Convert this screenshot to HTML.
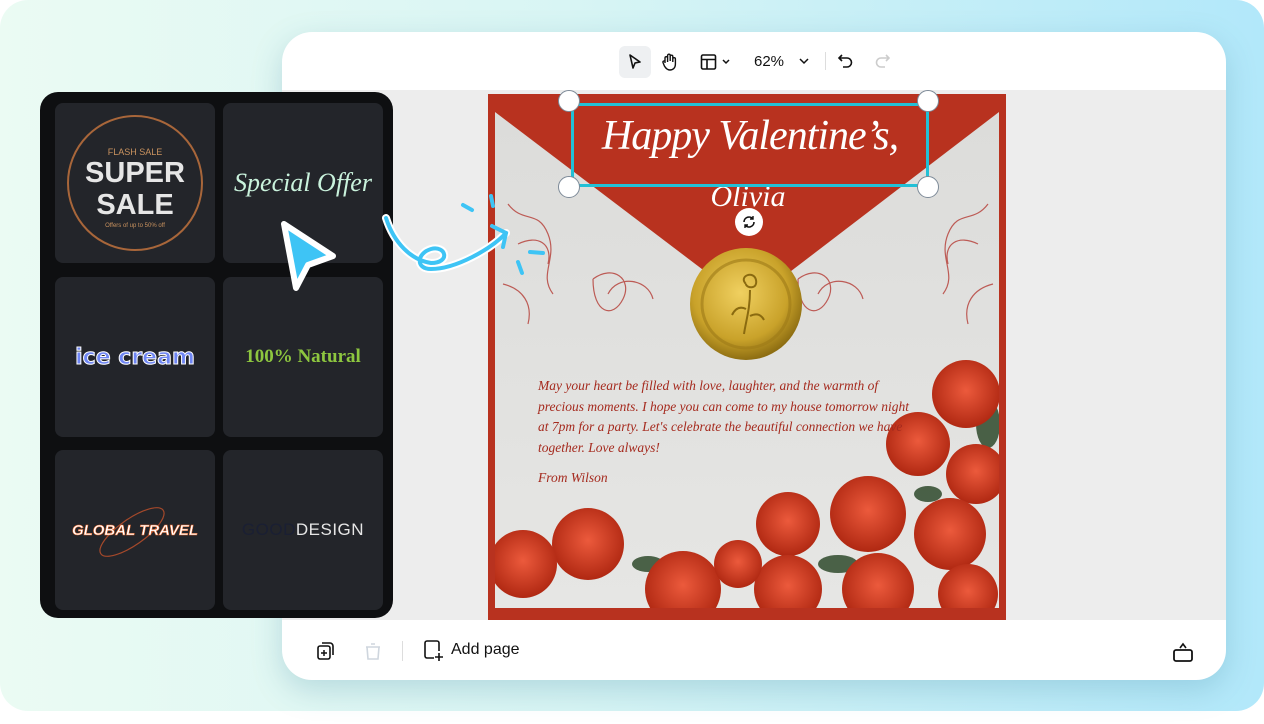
<!DOCTYPE html>
<html><head><style>
*{margin:0;padding:0;box-sizing:border-box}
body{width:1264px;height:724px;background:#fff;position:relative;overflow:hidden;font-family:"Liberation Sans",sans-serif}
.bg{position:absolute;left:0;top:0;width:1264px;height:711px;background:linear-gradient(90deg,#ebfbf3 0%,#d8f5f4 45%,#b2e8fa 100%);border-radius:28px}
.win{position:absolute;left:282px;top:32px;width:944px;height:648px;background:#fff;border-radius:30px;box-shadow:0 10px 30px rgba(60,130,160,.25);overflow:hidden}
.canvas{position:absolute;left:0;top:58px;width:944px;height:530px;background:#ededed}
.card{position:absolute;left:206px;top:4px;width:518px;height:526px;background:#b8321f;overflow:hidden}
.panel{position:absolute;left:40px;top:92px;width:353px;height:526px;background:#0e0f11;border-radius:18px}
.tile{position:absolute;width:160px;height:160px;background:#23252a;border-radius:8px;display:flex;align-items:center;justify-content:center;overflow:hidden}
.script{font-family:"Liberation Serif",serif;font-style:italic}
</style></head><body>
<div class="bg"></div>
<div class="win">
  <div style="position:absolute;left:337px;top:14px;width:32px;height:32px;background:#eef0f2;border-radius:6px"></div>
  <svg style="position:absolute;left:345px;top:21px" width="16" height="18" viewBox="0 0 16 18"><path d="M3 2 L13 9 L8 10 L6 15 Z" fill="none" stroke="#111" stroke-width="1.6" stroke-linejoin="round"/></svg>
  <svg style="position:absolute;left:379px;top:20px" width="18" height="20" viewBox="0 0 18 20"><path d="M4 11V6a1.3 1.3 0 0 1 2.6 0v4M6.6 9V3.5a1.3 1.3 0 0 1 2.6 0V9M9.2 9V4.5a1.3 1.3 0 0 1 2.6 0V10M11.8 10V7a1.3 1.3 0 0 1 2.6 0v5c0 4-2.5 6-5.5 6-2.5 0-4-1.5-5.5-4L2 10.5a1.2 1.2 0 0 1 2-1.2L4 11" fill="none" stroke="#111" stroke-width="1.4" stroke-linejoin="round"/></svg>
  <svg style="position:absolute;left:418px;top:21px" width="30" height="18" viewBox="0 0 30 18"><rect x="1.5" y="2" width="14" height="14" rx="1.5" fill="none" stroke="#111" stroke-width="1.6"/><path d="M1.5 6.5h14M7 6.5V16" stroke="#111" stroke-width="1.6"/><path d="M23 7l3 3 3-3" fill="none" stroke="#111" stroke-width="1.5"/></svg>
  <div style="position:absolute;left:472px;top:21px;font-size:15px;color:#111">62%</div>
  <svg style="position:absolute;left:516px;top:24px" width="12" height="10"><path d="M2 3l4 4 4-4" fill="none" stroke="#111" stroke-width="1.5"/></svg>
  <div style="position:absolute;left:543px;top:20px;width:1px;height:18px;background:#ddd"></div>
  <svg style="position:absolute;left:555px;top:20px" width="18" height="18" viewBox="0 0 18 18"><path d="M5 3L2 6l3 3M2 6h8a4.5 4.5 0 0 1 0 9H6" fill="none" stroke="#111" stroke-width="1.6"/></svg>
  <svg style="position:absolute;left:591px;top:20px" width="18" height="18" viewBox="0 0 18 18"><path d="M13 3l3 3-3 3M16 6H8a4.5 4.5 0 0 0 0 9h4" fill="none" stroke="#ccc" stroke-width="1.6"/></svg>

  <div class="canvas">
    <div class="card">
      <svg width="518" height="526" style="position:absolute;left:0;top:0">
        <defs>
          <linearGradient id="env" x1="0" y1="0" x2="0" y2="1"><stop offset="0" stop-color="#dcdcda"/><stop offset="1" stop-color="#e6e6e4"/></linearGradient>
          <radialGradient id="gold" cx=".45" cy=".4" r=".6"><stop offset="0" stop-color="#f0d060"/><stop offset=".7" stop-color="#c9a22a"/><stop offset="1" stop-color="#8e6e12"/></radialGradient>
          <radialGradient id="rose" cx=".5" cy=".45" r=".55"><stop offset="0" stop-color="#ec5a3c"/><stop offset="1" stop-color="#b02812"/></radialGradient>
        </defs>
        <rect x="7" y="14" width="504" height="506" fill="url(#env)"/>
        <path d="M7 0 L511 0 L511 18 L260 210 L7 18 Z" fill="#b8321f"/>
        <g fill="none" stroke="#b43a33" stroke-width="1.2" opacity=".8">
          <path d="M20 110c15 20 30 5 40 30s-10 40 5 60M30 150c20-10 35 0 30 20M15 190c20 5 30 20 25 40"/>
          <path d="M105 185c20-15 40 0 30 20s-30 15-30-20M120 200c10-20 40-15 45 5"/>
          <path d="M310 185c20-15 40 0 30 20s-30 15-30-20M330 200c10-20 40-15 45 5"/>
          <path d="M500 110c-15 20-30 5-40 30s10 40-5 60M490 150c-20-10-35 0-30 20M505 190c-20 5-30 20-25 40"/>
        </g>
        <circle cx="258" cy="210" r="56" fill="url(#gold)"/>
        <circle cx="258" cy="210" r="44" fill="none" stroke="#9c7a18" stroke-width="3" opacity=".6"/>
        <path d="M258 190c-8-8 8-14 10-4s-10 8-10 4M262 196c0 20-4 30-6 44M258 215c-8-4-12 2-14 6M262 222c8-4 12 0 14 4" fill="none" stroke="#8a6a10" stroke-width="2"/>
        <g fill="#2f4a2c" opacity=".85"><ellipse cx="350" cy="470" rx="20" ry="9"/><ellipse cx="160" cy="470" rx="16" ry="8"/><ellipse cx="500" cy="330" rx="12" ry="24"/><ellipse cx="250" cy="470" rx="14" ry="8"/><ellipse cx="440" cy="400" rx="14" ry="8"/></g>
        <g fill="url(#rose)">
          <circle cx="478" cy="300" r="34"/><circle cx="430" cy="350" r="32"/><circle cx="488" cy="380" r="30"/>
          <circle cx="380" cy="420" r="38"/><circle cx="462" cy="440" r="36"/><circle cx="300" cy="430" r="32"/>
          <circle cx="100" cy="450" r="36"/><circle cx="35" cy="470" r="34"/><circle cx="195" cy="495" r="38"/>
          <circle cx="300" cy="495" r="34"/><circle cx="390" cy="495" r="36"/><circle cx="480" cy="500" r="30"/><circle cx="250" cy="470" r="24"/>
        </g>
        <rect x="0" y="514" width="518" height="12" fill="#b8321f"/>
        <rect x="0" y="0" width="7" height="526" fill="#b8321f"/><rect x="511" y="0" width="7" height="526" fill="#b8321f"/>
      </svg>
      <div class="script" style="position:absolute;left:82px;top:18px;width:360px;text-align:center;color:#fff;font-size:42px;letter-spacing:-1px;white-space:nowrap">Happy Valentine’s,</div>
      <div class="script" style="position:absolute;left:190px;top:86px;width:140px;text-align:center;color:#fff;font-size:30px">Olivia</div>
      <div class="script" style="position:absolute;left:50px;top:282px;width:372px;color:#a52a1e;font-size:13.5px;line-height:20.5px">May your heart be filled with love, laughter, and the warmth of precious moments. I hope you can come to my house tomorrow night at 7pm for a party. Let's celebrate the beautiful connection we have together. Love always!</div>
      <div class="script" style="position:absolute;left:50px;top:376px;color:#a52a1e;font-size:13.5px">From Wilson</div>
    </div>
    <div style="position:absolute;left:289px;top:13px;width:358px;height:84px;border:3px solid #22c0d6"></div>
    <div style="position:absolute;left:276px;top:0px;width:22px;height:22px;border-radius:50%;background:#fff;border:1.5px solid #7d8a98"></div>
    <div style="position:absolute;left:635px;top:0px;width:22px;height:22px;border-radius:50%;background:#fff;border:1.5px solid #7d8a98"></div>
    <div style="position:absolute;left:276px;top:86px;width:22px;height:22px;border-radius:50%;background:#fff;border:1.5px solid #7d8a98"></div>
    <div style="position:absolute;left:635px;top:86px;width:22px;height:22px;border-radius:50%;background:#fff;border:1.5px solid #7d8a98"></div>
    <div style="position:absolute;left:453px;top:118px;width:28px;height:28px;border-radius:50%;background:#fff"></div>
    <svg style="position:absolute;left:459px;top:124px" width="16" height="16" viewBox="0 0 16 16"><path d="M3 8a5 5 0 0 1 9-3M13 8a5 5 0 0 1-9 3" fill="none" stroke="#111" stroke-width="1.6"/><path d="M12 2v3h-3M4 14v-3h3" fill="none" stroke="#111" stroke-width="1.4"/></svg>
  </div>
  <svg style="position:absolute;left:34px;top:608px" width="20" height="22" viewBox="0 0 20 22"><rect x="2" y="6" width="12" height="13" rx="2" fill="none" stroke="#111" stroke-width="1.6"/><path d="M6 3h8a3 3 0 0 1 3 3v9" fill="none" stroke="#111" stroke-width="1.6"/><path d="M8 10v6M5 13h6" stroke="#111" stroke-width="1.5"/></svg>
  <svg style="position:absolute;left:82px;top:608px" width="18" height="22" viewBox="0 0 18 22"><path d="M3 7h12l-1 12H4zM2 7h14M7 4h4" fill="none" stroke="#cfd6de" stroke-width="1.6"/></svg>
  <div style="position:absolute;left:120px;top:609px;width:1px;height:20px;background:#ddd"></div>
  <svg style="position:absolute;left:141px;top:607px" width="22" height="24" viewBox="0 0 22 24"><path d="M11 19H4a2 2 0 0 1-2-2V4a2 2 0 0 1 2-2h10a2 2 0 0 1 2 2v8" fill="none" stroke="#111" stroke-width="1.6"/><path d="M16 14v8M12 18h8" stroke="#111" stroke-width="1.6"/></svg>
  <div style="position:absolute;left:169px;top:609px;font-size:16px;color:#111">Add page</div>
  <svg style="position:absolute;left:889px;top:606px" width="24" height="26" viewBox="0 0 24 26"><rect x="3" y="12" width="18" height="11" rx="2" fill="none" stroke="#111" stroke-width="1.8"/><path d="M9 10l3-4 3 4" fill="none" stroke="#111" stroke-width="1.6"/></svg>
</div>

<div class="panel">
  <div class="tile" style="left:15px;top:11px">
    <div style="width:136px;height:136px;border-radius:50%;border:2px solid #a8663a;text-align:center;color:#e6e6e6">
      <div style="font-size:9px;color:#c9925f;margin-top:30px">FLASH SALE</div>
      <div style="font-size:29px;font-weight:bold;line-height:32px">SUPER<br>SALE</div>
      <div style="font-size:6px;color:#c9925f;margin-top:2px">Offers of up to 50% off</div>
    </div>
  </div>
  <div class="tile" style="left:183px;top:11px"><span class="script" style="color:#c9f2dc;font-size:26px">Special Offer</span></div>
  <div class="tile" style="left:15px;top:185px"><span style="font-family:'DejaVu Sans',sans-serif;font-weight:bold;font-size:22px;color:#6f86f3;-webkit-text-stroke:1px #fff">ice cream</span></div>
  <div class="tile" style="left:183px;top:185px"><span style="font-family:'Liberation Serif',serif;font-weight:bold;font-size:19px;color:#8dc63f">100% Natural</span></div>
  <div class="tile" style="left:15px;top:358px"><svg style="position:absolute;left:42px;top:55px" width="70" height="55"><ellipse cx="35" cy="27" rx="38" ry="13" transform="rotate(-35 35 27)" fill="none" stroke="#a5492a" stroke-width="1.2"/></svg><span style="position:relative;font-weight:bold;font-style:italic;font-size:15px;color:#fff;-webkit-text-stroke:.5px #f06a2a">GLOBAL TRAVEL</span></div>
  <div class="tile" style="left:183px;top:358px"><span style="font-size:17px;letter-spacing:.5px;color:#1a1f33">GOOD</span><span style="font-size:17px;letter-spacing:.5px;color:#e6e6e6">DESIGN</span></div>
</div>

<svg style="position:absolute;left:270px;top:190px" width="290" height="110" viewBox="270 190 290 110">
  <path d="M284 224 L333 256 L308 265 L296 288 Z" fill="#3ec4f5" stroke="#fff" stroke-width="6" stroke-linejoin="round"/>
  <path d="M386 218c8 25 25 42 45 45c20 0 15-18 0-14c-14 4-16 20 0 20c25 0 60-20 75-36" fill="none" stroke="#fff" stroke-width="8" stroke-linecap="round"/>
  <path d="M386 218c8 25 25 42 45 45c20 0 15-18 0-14c-14 4-16 20 0 20c25 0 60-20 75-36" fill="none" stroke="#3ec4f5" stroke-width="4" stroke-linecap="round"/>
  <path d="M492 226l14 7-3 14" fill="none" stroke="#3ec4f5" stroke-width="4" stroke-linecap="round"/>
  <path d="M463 205l9 5M491 196l2 10M530 252l13 1M518 262l4 11" stroke="#3ec4f5" stroke-width="4" stroke-linecap="round"/>
</svg>
</body></html>
